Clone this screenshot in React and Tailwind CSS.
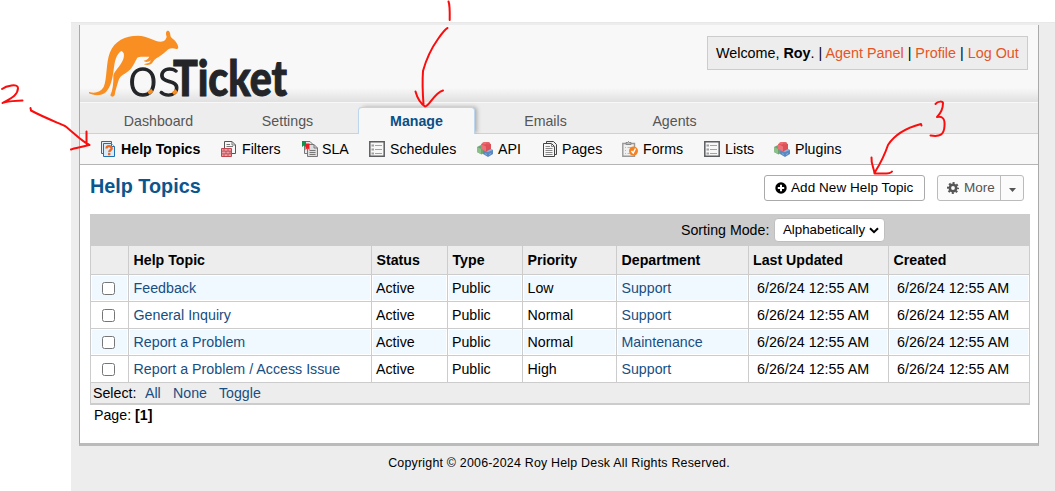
import React from "react";

const TABS = ["Dashboard", "Settings", "Manage", "Emails", "Agents"];

const ROWS = [
  ["Feedback", "Low", "Support"],
  ["General Inquiry", "Normal", "Support"],
  ["Report a Problem", "Normal", "Maintenance"],
  ["Report a Problem / Access Issue", "High", "Support"],
];

const COLS = "grid grid-cols-[37px_242px_75px_74px_93px_131px_139px_140px] gap-x-px";

function Logo() {
  return (
    <svg className="block h-[71px] w-[200px] overflow-visible" viewBox="60 39 600 213">
      <path
        fill="#f98f22"
        d="M57 231 C75 236 92 232 101 216 C112 190 107 145 120 112 C133 78 166 62 203 62 C235 62 251 80 272 80 C284 79 288 73 290 65 C286 54 288 47 294 47 C301 48 300 58 303 67 C310 73 321 81 324 93 C326 99 324 103 319 102 C310 99 301 99 295 103 C286 111 277 120 267 125 C255 131 251 137 246 145 C240 151 231 151 221 148 L238 143 L243 136 C233 143 224 141 221 137 C230 136 236 130 238 125 C225 127 211 123 202 128 C192 143 190 161 163 177 C151 184 147 190 144 202 C140 216 136 227 134 240 C131 246 124 247 121 241 C128 226 131 204 130 183 C132 167 151 156 160 132 C164 119 162 112 154 108 C139 118 135 136 132 157 C128 189 123 216 108 231 C94 244 71 242 57 235 Z"
      />
      <text x="174" y="242" fontSize="164" textLength="157" lengthAdjust="spacingAndGlyphs" fill="#232528" stroke="#232528" strokeWidth="4" className="font-['Lato'] font-light">os</text>
      <text x="309" y="243" fontSize="146" textLength="342" lengthAdjust="spacingAndGlyphs" fill="#232528" stroke="#232528" strokeWidth="3" className="font-['Lato'] font-black">Ticket</text>
      <path d="M235 235 L247 226 M309 236 L320 227" stroke="#f98f22" strokeWidth="11" />
    </svg>
  );
}

function Svg({ children }) {
  return (
    <svg className="block h-4 w-4 shrink-0" viewBox="0 0 16 16" fill="none">
      {children}
    </svg>
  );
}

const HelpIcon = () => (
  <Svg>
    <path d="M.5 12.500V.5H10.500V2.500H3.500V12.500Z" fill="#e3f0fa" stroke="#1f6fb2" />
    <path d="M2.500 2.500H10.500L13.500 5.500V15.500H2.500Z" fill="#d8ebf8" stroke="#1f6fb2" />
    <path d="M10.500 2.500V5.500H13.500" fill="#fff" stroke="#1f6fb2" />
    <path d="M5.500 7.500C5.500 4.500 10.700 4.500 10.700 7.300C10.700 9.200 8.200 8.800 8.200 11.300M8.200 12V14.300" stroke="#f4651a" strokeWidth="2.300" />
  </Svg>
);

const FilterIcon = () => (
  <Svg>
    <path d="M3.500 8V.5H11L14.500 4V12.500H11" fill="#f7f7f7" stroke="#555" />
    <path d="M11 .5V4H14.500M5.500 3.500H9M5.500 5.500H12" stroke="#777" />
    <path d="M.5 7.500H10.500V15.500H.5Z" fill="#e9a0a5" stroke="#c2444e" />
    <path d="M1 10.200H10M1 12.800H10M3 8V10M7 8V10M5 10V13M9 10V13M3 13V15M7 13V15" stroke="#c2444e" strokeWidth=".8" />
  </Svg>
);

const SlaIcon = () => (
  <Svg>
    <path d="M2.500 .5H8L10.500 3V12.500H2.500Z" fill="#e8e8e8" stroke="#777" />
    <path d="M5.500 3.500H12L15.500 7V15.500H5.500Z" fill="#ddd" stroke="#777" />
    <path d="M12 3.500V7H15.500M7.500 9.500H13.500M7.500 11.500H13.500M7.500 13.500H13.500" stroke="#777" />
    <path d="M0 0H4V6L2 4.500L0 6Z" fill="#16914b" />
    <path d="M3.500 2.500H7.500V9L5.500 7L3.500 9Z" fill="#ee1c24" />
  </Svg>
);

const ListIcon = () => (
  <Svg>
    <path d="M.8 .8H15.200V15.200H.8Z" fill="#f7f7f7" stroke="#5b5d61" strokeWidth="1.500" />
    <path d="M6 4.500H13M6 8.500H13M6 12.500H13" stroke="#a3a3a3" />
    <path d="M2.500 4.500H5M2.500 8.500H5M2.500 12.500H5" stroke="#a0a0a0" strokeWidth="2" />
  </Svg>
);

const BlocksIcon = () => (
  <Svg>
    <path d="M0 6L4 4L7 6V12L4.500 13.500L0 11Z" fill="#6da570" />
    <path d="M0 6L4 8V13L0 11Z" fill="#8cc08b" />
    <path d="M6 9L11 7L16 9V13L11 16L6 13Z" fill="#5a88c0" />
    <path d="M6 9L11 11L16 9L11 7Z" fill="#8fb3de" />
    <path d="M4 3L9 1L14 3V8L9 10.500L4 8Z" fill="#de5058" />
    <path d="M4 3L9 5.500V10.500L4 8Z" fill="#ea7278" />
    <ellipse cx="7.300" cy="2.300" rx="2" ry="1.300" fill="#ee6b70" />
    <ellipse cx="11" cy="2.300" rx="2" ry="1.300" fill="#e85c63" />
    <path d="M8 12.500L10 13.500M12 13.500L14 12.500" stroke="#86aedd" />
  </Svg>
);

const PagesIcon = () => (
  <Svg>
    <path d="M3.500 2V.5H10.500L13.500 3.500V13.500H11.500" fill="#eee" stroke="#444" />
    <path d="M.5 2.500H8.500L11.500 5.500V15.500H.5Z" fill="#f7f7f7" stroke="#444" />
    <path d="M8.500 2.500V5.500H11.500M2.500 5.500H7M2.500 7.500H9.500M2.500 9.500H9.500M2.500 11.500H9.500M2.500 13.500H9.500" stroke="#888" />
  </Svg>
);

const FormsIcon = () => (
  <Svg>
    <path d="M.8 2.500H12.500V15.200H.8Z" fill="#f0f0f0" stroke="#999" strokeWidth="1.400" />
    <path d="M4 3.500V1.500H5.500L6.500 .5L7.500 1.500H9V3.500Z" fill="#bbb" stroke="#888" />
    <path d="M3 6.500H4M3 9.500H4M3 12.500H4M5.500 6.500H9M5.500 12.500H8" stroke="#bbb" />
    <circle cx="11.500" cy="10" r="4.500" fill="#f58220" />
    <path d="M9.500 10L11.200 12L13.500 7.500" stroke="#fff" strokeWidth="1.500" />
  </Svg>
);

const SUBNAV = [
  ["Help Topics", HelpIcon, "w-[120px] gap-1 font-bold"],
  ["Filters", FilterIcon, "w-[81px] gap-[5px]"],
  ["SLA", SlaIcon, "w-[67px] gap-1"],
  ["Schedules", ListIcon, "w-[108px] gap-[5px]"],
  ["API", BlocksIcon, "w-[66px] gap-[5px]"],
  ["Pages", PagesIcon, "w-[79px] gap-[3px]"],
  ["Forms", FormsIcon, "w-[82px] gap-[5px]"],
  ["Lists", ListIcon, "w-[70px] gap-[5px]"],
  ["Plugins", BlocksIcon, "w-[80px] gap-[5px]"],
];

function Annotations() {
  return (
    <svg
      className="pointer-events-none absolute left-0 top-0 h-[491px] w-[1055px]"
      viewBox="0 0 1055 491"
      fill="none"
      stroke="#fb0d0d"
      strokeWidth="2"
      strokeLinecap="round"
      strokeLinejoin="round"
    >
      <path d="M448.500 1.500Q450 5 449.700 20" />
      <path d="M447.500 28Q445 29 438 39Q428 53 423 71Q422 85 423.500 104M415.500 91.500C417 97 420 103 425 106.500C429 107 434 93 443 90.500" />
      <path d="M2 89C6 86 18 83 18 88C18 96 9 99 2.500 103C6 101 14 101 22.500 100.500" />
      <path d="M30.500 108L31 110.500C41 116 56 122 65 126C74 133 81 141 89.500 145M86.500 131.500L86.500 144M71 149.500C74 148 82 147 89 145" />
      <path d="M935.500 104C938 101 943 101 943 103C943 109 941 113 937 117C943 116 945 119 944.500 126C944 135 940 137 930.500 135.500" />
      <path d="M921.500 125.500L921 124C906 128 895 134 888 145C884 157 880 164 875 172M871.500 157.500C871 164 874 168 874.500 173.500C880 173 890 175 892 171.500" />
    </svg>
  );
}

export default function App() {
  return (
    <div className="relative h-[491px] w-[1055px] overflow-hidden bg-white pl-[71px] pt-[22px] font-['Liberation_Sans',Arial,sans-serif] text-[14.2px] leading-[18px] text-black">
      <div className="h-[469px] border-t border-[#e8e8e8] bg-[#ededed] pl-2 pt-[2px]">
        <div className="flex h-[421px] w-[960px] flex-col border-x border-b-[3px] border-x-[#aaa] border-b-[#bbb] bg-white">
          <header className="flex h-[77px] justify-between bg-[linear-gradient(#f8f8f8_0,#f8f8f8_63px,#e0e0e0_77px)] pl-[10px] pr-[10px] pt-[3px]">
            <Logo />
            <div className="mt-2 h-[34px] w-[321px] whitespace-nowrap border border-[#ccc] bg-[#ededed] pl-2 pt-2 text-[14.35px] leading-[17px]">
              Welcome, <b>Roy</b>. | <a className="text-[#e65524]">Agent Panel</a> | <a className="text-[#e65524]">Profile</a> | <a className="text-[#e65524]">Log Out</a>
            </div>
          </header>

          <nav className="flex h-8 border-b border-t border-b-[#bcd6ee] border-t-[#f8f8f8] bg-[#ededed] pl-[14px]">
            {TABS.map((t) => (
              <div key={t} className="w-[129px] px-[6px] pt-1 text-center text-[#555]">
                {t === "Manage" ? (
                  <div className="h-[28px] w-[117px] rounded-t-[4px] border border-b-0 border-[#bcd6ee] bg-[#f7f7f7] pt-1 font-bold text-[#0a4f87] shadow-[3px_-1px_4px_-1px_#aaa]">
                    {t}
                  </div>
                ) : (
                  <div className="pt-[5px]">{t}</div>
                )}
              </div>
            ))}
          </nav>

          <nav className="relative flex h-[31px] shrink-0 items-center whitespace-nowrap border-b border-[#b5b5b5] bg-[#f7f7f7] pl-[21px]">
            {SUBNAV.map(([label, Icon, cls]) => (
              <a key={label} className={`flex items-center ${cls}`}>
                <Icon />
                <span>{label}</span>
              </a>
            ))}
          </nav>

          <main className="flex flex-1 flex-col pl-[10px] pr-[9px]">
            <div className="flex h-[49px] items-start">
              <h1 className="mt-[10px] flex-1 text-[19.8px] font-bold leading-[22px] text-[#0a568e]">Help Topics</h1>
              <button className="mt-[10px] flex h-[26px] w-[161px] items-center whitespace-nowrap rounded-[3px] border border-[#aaa] bg-white pl-[10px] text-[13.5px] tracking-[0.06px]">
                <svg className="mr-1 h-3 w-3" viewBox="0 0 12 12">
                  <circle cx="6" cy="6" r="5.700" />
                  <path d="M6 2.800V9.200M2.800 6H9.200" stroke="#fff" strokeWidth="2" />
                </svg>
                Add New Help Topic
              </button>
              <div className="ml-3 mr-[5px] mt-[10px] flex h-[26px] w-[87px] items-center rounded-[3px] border border-[#bbb] bg-[#fbfbfb] pl-[9px] text-[13.5px] text-[#555]">
                <svg className="mr-[5px] h-3 w-3" viewBox="0 0 12 12" fill="none" stroke="#555">
                  <circle cx="6" cy="6" r="3.200" strokeWidth="2.600" />
                  <circle cx="6" cy="6" r="5" strokeWidth="2" strokeDasharray="2 1.927" strokeDashoffset="1" />
                </svg>
                <span className="w-9">More</span>
                <span className="flex h-6 flex-1 items-center justify-center border-l border-[#bbb]">
                  <svg className="mt-[3px] h-1 w-[7px]" viewBox="0 0 7 4"><path d="M0 0H7L3.500 4Z" fill="#555" /></svg>
                </span>
              </div>
            </div>

            <section className="flex w-[940px] flex-col bg-[#ccc]">
              <div className="flex h-8 items-center pl-[591px]">
                <span className="w-[93px] whitespace-nowrap">Sorting Mode:</span>
                <div className="flex h-6 w-[111px] items-center rounded-[4px] border border-[#bfbfbf] bg-white pl-2 text-[13.3px]">
                  <span className="w-[86px]">Alphabetically</span>
                  <svg className="h-[7px] w-[10px]" viewBox="0 0 10 7"><path d="M1 1.200L5 5.200L9 1.200" fill="none" stroke="#000" strokeWidth="2" /></svg>
                </div>
              </div>
              <div className={`${COLS} mx-px mb-px h-7 font-bold leading-7 [&>*]:bg-[#ededed] [&>*]:pl-[4.5px]`}>
                <div />
                <div>Help Topic</div>
                <div>Status</div>
                <div>Type</div>
                <div>Priority</div>
                <div>Department</div>
                <div className="!pl-1">Last Updated</div>
                <div>Created</div>
              </div>
              {ROWS.map(([topic, priority, dept], i) => (
                <div
                  key={topic}
                  className={`${COLS} mx-px mb-px h-[26px] whitespace-nowrap leading-[26px] [&>*]:border [&>*]:border-white [&>*]:pl-[3px] [&>*]:leading-6 ${i % 2 ? "[&>*]:bg-white" : "[&>*]:bg-[#f0f9ff]"}`}
                >
                  <div className="flex items-center !pl-[10px]">
                    <span className="h-[13px] w-[13px] rounded-[2.5px] border border-[#767676] bg-white" />
                  </div>
                  <div className="!pl-[3.5px] text-[14.25px] text-[#184e81]">{topic}</div>
                  <div>Active</div>
                  <div>Public</div>
                  <div className="!pl-[3.5px]">{priority}</div>
                  <div className="!pl-[3.5px] text-[#184e81]">{dept}</div>
                  <div className="!pl-[7px] text-[14.3px]">6/26/24 12:55 AM</div>
                  <div className="!pl-[7px] text-[14.3px]">6/26/24 12:55 AM</div>
                </div>
              ))}
              <div className="mx-px mb-[2px] flex h-5 bg-[#ededed] pl-[2px] leading-5">
                <span className="w-[52px]">Select:</span>
                <a className="w-7 text-[#184e81]">All</a>
                <a className="w-[46px] text-[#184e81]">None</a>
                <a className="text-[#184e81]">Toggle</a>
              </div>
            </section>
            <div className="pl-1 pt-[1px]">Page: <b>[1]</b></div>
          </main>
        </div>
        <footer className="w-[960px] pt-[8px] text-center text-[12.4px] tracking-[0.22px]">
          Copyright © 2006-2024 Roy Help Desk All Rights Reserved.
        </footer>
      </div>
      <Annotations />
    </div>
  );
}
